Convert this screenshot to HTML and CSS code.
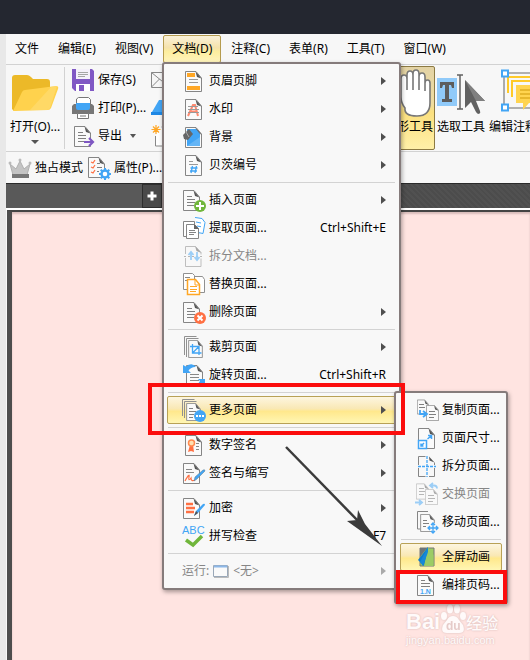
FILE: index.html
```html
<!DOCTYPE html>
<html lang="zh-CN">
<head>
<meta charset="utf-8">
<title>文档</title>
<link rel="stylesheet" href="styles.css">
</head>
<body>
<svg class="defs" aria-hidden="true">
  <symbol id="page" viewBox="0 0 17 21"><path d="M.5.500H11L16.500 7V20.500H.5Z" fill="#fafafa" stroke="#858585"/><path d="M10.500.500L16.500 7.500L12 6Z" fill="#555"/></symbol>
  <symbol id="lines" viewBox="0 0 17 21"><path d="M4 6.500h5M4 9.500h8M4 12.500h8M4 15.500h7" stroke="#808080"/></symbol>
</svg>

<div class="backdrop"></div>
<main class="app">
  <nav class="menubar">
    <button>文件</button><button>编辑(E)</button><button>视图(V)</button><button class="open">文档(D)</button><button>注释(C)</button><button>表单(R)</button><button>工具(T)</button><button>窗口(W)</button>
  </nav>

  <div class="toolbar">
    <button class="big open-file">
      <svg width="48" height="40" viewBox="0 0 48 40"><path d="M1 36V5q0-3 3-3h12q2 0 4 2l2 2h14q3 0 3 3v18L3 38Z" fill="#ecb928"/><path d="M2 38l9-19q1-2 3-2l31-4q3 0 2 3l-7 19q-1 2-3 2L4 38Z" fill="#ffd24d"/><path d="M19 37L40 14l6-1-7 22q-1 2-3 2Z" fill="#ffdc70" opacity=".7"/></svg>
      <span>打开(O)...</span>
      <svg width="8" height="5" viewBox="0 0 8 5"><path d="M0 0h8L4 4Z" fill="#555"/></svg>
    </button>
    <div class="stack">
      <button><svg width="24" height="24" viewBox="0 0 24 24"><path d="M1 1h20l2 2v20H4l-3-3Z" fill="#8058c4"/><path d="M5 1h14v10H5Z" fill="#f4f0fa"/><path d="M7 4.500h10M7 6.500h10M7 8.500h7" stroke="#a5a5a5"/><path d="M5 16h14v7H5Z" fill="#fff"/><path d="M8 17h5v6H8Z" fill="#8058c4"/></svg>保存(S)</button>
      <button><svg width="24" height="24" viewBox="0 0 24 24"><path d="M5.500 10V3l2-1.500h10l2 2V10" fill="#fff" stroke="#777"/><path d="M3 8h18l2 2v8H1v-8Z" fill="#777"/><path d="M5 7h14v5q0 2-2 2H7q-2 0-2-2Z" fill="#42a5f5"/><path d="M6.500 17.500h11v5h-11Z" fill="#fff" stroke="#777"/><path d="M9 20h6" stroke="#777"/></svg>打印(P)...</button>
      <button><svg width="24" height="24" viewBox="0 0 24 24"><use href="#page" x="3" y="2" width="17" height="21"/><use href="#lines" x="3" y="2" width="17" height="21"/><path d="M13 18h8" stroke="#f7f7f7" stroke-width="6"/><path d="M13 18h9M18 14l4 4-4 4" fill="none" stroke="#7e57c2" stroke-width="2.200"/></svg>导出<i class="caret"></i></button>
    </div>
    <div class="stack hidden-part">
      <button aria-label="邮件"><svg width="24" height="24" viewBox="0 0 24 24"><path d="M.5 4.500h22v15h-22ZM.5 4.500l11 9 11-9M.5 19l8-8" fill="none" stroke="#888"/></svg></button>
      <button aria-label="扫描"><svg width="24" height="24" viewBox="0 0 24 24"><path d="M1 16L8 4h15v12Z" fill="#42a5f5"/><path d="M0 16h24v3H0Z" fill="#1e88e5"/></svg></button>
      <button aria-label="新建"><svg width="24" height="24" viewBox="0 0 24 24"><path d="M4.500 12v10h15V3h-9" fill="#fff" stroke="#888"/><path d="M5 1v9M.5 5.500h9M2 2.500l6 6M8 2.500l-6 6" stroke="#ffa726" stroke-width="1.200"/></svg></button>
    </div>
    <button class="big tool active">
      <svg width="48" height="50" viewBox="0 0 48 50"><path d="M16 29V11q0-4 3-4t3 4v11V7q0-4 3-4t3 4v15V6q0-4 3-4t3 4v16V9q0-4 3-4t3 4v14v-8q0-3 2.500-3t2.500 3v20q0 13-13 13T20 40q-4-5-4-11Z" fill="#fff" stroke="#777" stroke-width="1.600"/></svg>
      <span>手形工具</span>
    </button>
    <button class="big tool">
      <svg width="48" height="50" viewBox="0 0 48 50"><path d="M0 10h20v28H0Z" fill="#90caf9"/><path d="M3 14h14v6h-2l-1-3h-2v14h3v3H5v-3h3V17H6l-1 3H3Z" fill="#5c5c5c"/><path d="M20 7h6M20 41h6M23 7v34" stroke="#616161" stroke-width="1.500"/><path d="M28 12L48 33h-9l4 10q1 2-1 3-2 0-3-2l-5-10-6 6Z" fill="#616161"/><path d="M28 12L48 33h-9Z" fill="#808080"/></svg>
      <span>选取工具</span>
    </button>
    <button class="big tool">
      <svg width="48" height="50" viewBox="0 0 48 50"><path d="M15 5h32v35H15Z" fill="none" stroke="#999" stroke-width="1.600"/><path d="M19 25V9h28M23 29V13h24" fill="none" stroke="#ffca28" stroke-width="2"/><path d="M27 17h21v18H40l-6 7v-7h-7Z" fill="#ffd44f"/><path d="M31 22h17M31 26h17M31 30h12" stroke="#e0ad22" stroke-width="1.500"/><path d="M13 2.500h6v6h-6ZM13 36.500h6v6h-6Z" fill="#fff" stroke="#42a5f5" stroke-width="2"/></svg>
      <span>编辑注释</span>
    </button>
  </div>

  <div class="quickbar">
    <button><svg width="24" height="24" viewBox="0 0 24 24"><path d="M2 8l6 5 4-8 4 8 6-5-3 11H5Z" fill="#c4c4c4" stroke="#b0b0b0"/><path d="M4 18h17v4H4Z" fill="#777"/><circle cx="2" cy="7" r="1.500" fill="#bbb"/><circle cx="12" cy="4" r="1.500" fill="#bbb"/><circle cx="22" cy="7" r="1.500" fill="#bbb"/></svg>独占模式</button>
    <button><svg width="24" height="24" viewBox="0 0 24 24"><use href="#page" x="1" y="1" width="17" height="21"/><path d="M4 6l2 1 2-3M4 11l2 1 2-3M4 16l2 1 2-3" fill="none" stroke="#ff7043" stroke-width="1.200"/><path d="M10 7.500h3M10 11.500h5M10 15.500h2" stroke="#808080"/><g stroke="#42a5f5"><circle cx="18" cy="18" r="3.500" fill="#fff" stroke-width="2.400"/><path d="M18 12v3M18 21v3M12 18h3M21 18h3M13.700 13.700l2 2M20.300 20.300l2 2M22.300 13.700l-2 2M15.700 20.300l-2 2" stroke-width="2"/></g></svg>属性(P)...</button>
  </div>

  <div class="tabs"><div class="tab-blank"></div><button aria-label="新标签"><svg width="10" height="10" viewBox="0 0 10 10"><path d="M3.500 .5h3v3h3v3h-3v3h-3v-3h-3v-3h3Z" fill="#fff"/></svg></button></div>
  <section class="document"></section>
</main>

<ul class="menu main-menu">
  <li><button><svg class="icon" viewBox="0 0 24 24"><use href="#page" x="3" y="2" width="17" height="21"/><path d="M5 4h8v4H5ZM5 17h13v4H5Z" fill="#ffa726"/><path d="M7 10.500h9M7 13.500h9" stroke="#999"/></svg>页眉页脚<b></b></button></li>
  <li><button><svg class="icon" viewBox="0 0 24 24"><use href="#page" x="3" y="2" width="17" height="21"/><path d="M6 19L11 8h2l3 11M8 14.500h7" fill="none" stroke="#ff8a70" stroke-width="2"/><path d="M6 9.500h10M6 12.500h11M6 15.500h11" stroke="#999"/></svg>水印<b></b></button></li>
  <li><button><svg class="icon" viewBox="0 0 24 24"><use href="#page" x="3" y="2" width="17" height="21"/><path d="M5 4h9l4 5v12H5Z" fill="#42a5f5"/><path d="M5 21L18 12v9Z" fill="#64b5f6"/><path d="M1 10l6-6 4 5-5 6-4-1Z" fill="#666"/><path d="M4 7l3 5" stroke="#aaa"/></svg>背景<b></b></button></li>
  <li><button><svg class="icon" viewBox="0 0 24 24"><use href="#page" x="3" y="2" width="17" height="21"/><path d="M7 8.500h4M7 11.500h9" stroke="#999"/><path d="M10.500 13L9 20M14.500 13L13 20M8.500 15h7M8 18h7" stroke="#42a5f5" stroke-width="1.300"/></svg>贝茨编号<b></b></button></li>
  <li class="sep"></li>
  <li><button><svg class="icon" viewBox="0 0 24 24"><use href="#page" x="1" y="2" width="17" height="21"/><use href="#lines" x="1" y="2" width="17" height="21"/><circle cx="18" cy="18" r="6" fill="#70b63b"/><path d="M18 14v8M14 18h8" stroke="#fff" stroke-width="2"/></svg>插入页面<b></b></button></li>
  <li><button><svg class="icon" viewBox="0 0 24 24"><path d="M13 1.500l7 1 3 4-2 11-5-1" fill="#fff" stroke="#42a5f5"/><path d="M14 6l5 1M15 10l4 .7" stroke="#42a5f5"/><path d="M1.500 5.500h11v15h-11Z" fill="#fff" stroke="#858585"/><path d="M4.500 8.500h8l4 4v10h-12Z" fill="#fff" stroke="#858585"/><path d="M12 8v5h5Z" fill="#666"/><path d="M7 14.500h6M7 16.500h7M7 18.500h5" stroke="#858585"/></svg>提取页面...<kbd>Ctrl+Shift+E</kbd></button></li>
  <li><button disabled><svg class="icon faded" viewBox="0 0 24 24"><path d="M3.500 10V2.500h10l5.500 6v2M3.500 14v8.500h15.500v-8" fill="none" stroke="#858585"/><path d="M13 2l6.500 7-5-2Z" fill="#555"/><path d="M2 12.500h19" stroke="#777" stroke-dasharray="2"/><path d="M9 8v8M6.500 11L9 8l2.500 3M15 8v8M12.500 13l2.500 3 2.500-3" fill="none" stroke="#42a5f5" stroke-width="1.800"/></svg>拆分文档...</button></li>
  <li><button><svg class="icon" viewBox="0 0 24 24"><path d="M1.500 1.500h9l2 2v14h-11ZM12.500 4.500h8l2 3v13h-10Z" fill="#fff" stroke="#909090"/><path d="M3 5.500h5M3 8.500h3" stroke="#888"/><path d="M5.500 7.500h8l4 5v10h-12Z" fill="#fff" stroke="#ffa726" stroke-width="1.500"/><path d="M13 7v6h4M8 14.500h7M8 17.500h7M8 19.500h6" fill="none" stroke="#ffa726"/></svg>替换页面...</button></li>
  <li><button><svg class="icon" viewBox="0 0 24 24"><use href="#page" x="1" y="2" width="17" height="21"/><use href="#lines" x="1" y="2" width="17" height="21"/><circle cx="18" cy="18" r="6" fill="#ff7043"/><path d="M15.500 15.500l5 5M20.500 15.500l-5 5" stroke="#fff" stroke-width="2"/></svg>删除页面<b></b></button></li>
  <li class="sep"></li>
  <li><button><svg class="icon" viewBox="0 0 24 24"><path d="M2.500 20V1.500h12M4.500 22V3.500h12" fill="none" stroke="#909090"/><use href="#page" x="6" y="5" width="15" height="18"/><path d="M10.500 9v9h9M8 11.500h9V20M10.500 18l6-6" fill="none" stroke="#42a5f5" stroke-width="1.300"/></svg>裁剪页面<b></b></button></li>
  <li><button><svg class="icon" viewBox="0 0 24 24"><use href="#page" x="4" y="2" width="17" height="21"/><path d="M8 11.500h9M8 14.500h9M8 17.500h9" stroke="#888"/><path d="M1 2v8h8L6.500 7.500q3-4 7.500-3.500-4-5-10-.5ZM23 24v-8h-7l2 2q-2 4-7 4 5 3 10 0Z" fill="#42a5f5"/></svg>旋转页面...<kbd>Ctrl+Shift+R</kbd></button></li>
  <li class="sep"></li>
  <li class="parent"><button class="hot"><svg class="icon" viewBox="0 0 24 24"><path d="M.5 18V1.500h12M2.500 20V3.500h12" fill="none" stroke="#909090"/><use href="#page" x="4" y="5" width="15" height="18"/><path d="M7 10.500h4M7 13.500h7M7 16.500h5M7 19.500h4" stroke="#808080"/><circle cx="18" cy="18" r="6" fill="#42a5f5"/><path d="M14 18h2M17 18h2M20 18h2" stroke="#fff" stroke-width="2"/></svg>更多页面<b></b></button>
    <ul class="menu sub-menu">
      <li><button><svg class="icon" viewBox="0 0 24 24"><use href="#page" x="2" y="1" width="12" height="16"/><path d="M4 6.500h5M4 9.500h6" stroke="#808080"/><use href="#page" x="11" y="7" width="13" height="16"/><path d="M14 13.500h6M14 16.500h7M14 19.500h5" stroke="#808080"/><path d="M5 12v4h6M8 13l4 3-4 3" fill="none" stroke="#42a5f5" stroke-width="1.800"/></svg>复制页面...</button></li>
      <li><button><svg class="icon" viewBox="0 0 24 24"><use href="#page" x="3" y="2" width="17" height="21"/><path d="M3.500 14.500h8v8h-8Z" fill="#fff" stroke="#42a5f5" stroke-width="1.500"/><path d="M6 20l3-3M6 17.500V20h2.500M12.500 13l3.500-3M13 9.500h3.500V13" fill="none" stroke="#42a5f5" stroke-width="1.500"/></svg>页面尺寸...</button></li>
      <li><button><svg class="icon" viewBox="0 0 24 24"><path d="M3.500 11V2.500h7M3.500 14v8.500h7M14 22.500h5.500V14M19.500 11V8.500" fill="none" stroke="#858585"/><path d="M14 2.500l5.500 6-5-2Z" fill="#555"/><path d="M12 2v21M3 12.500h18" stroke="#42a5f5" stroke-width="1.300" stroke-dasharray="3 1"/></svg>拆分页面...</button></li>
      <li><button disabled><svg class="icon faded" viewBox="0 0 24 24"><use href="#page" x="1" y="1" width="13" height="17"/><path d="M4 6.500h5M4 9.500h6M4 12.500h5" stroke="#777"/><use href="#page" x="10" y="7" width="13" height="16"/><path d="M13 13.500h6M13 16.500h7M13 19.500h5" stroke="#777"/><path d="M18 1l-3 2.500 3 2.500M16 3.500h3q3 0 3 3M4 18l3 2.500-3 2.500M0 20.500h6" fill="none" stroke="#42a5f5" stroke-width="1.800"/></svg>交换页面</button></li>
      <li><button><svg class="icon" viewBox="0 0 24 24"><path d="M13 1.500H2.500V19h3" fill="none" stroke="#858585"/><use href="#page" x="5" y="4" width="15" height="18"/><path d="M8 10.500h4M8 13.500h6M8 16.500h3" stroke="#808080"/><path d="M18 13v10M13 18h10" stroke="#f7f7f7" stroke-width="4"/><path d="M18 13v10M13 18h10M16 15l2-2 2 2M16 21l2 2 2-2M15 16l-2 2 2 2M21 16l2 2-2 2" fill="none" stroke="#42a5f5" stroke-width="1.300"/></svg>移动页面...</button></li>
      <li class="sep"></li>
      <li><button class="hot"><svg class="icon" viewBox="0 0 24 24"><path d="M5 3h14v18H5Z" fill="#9ccc65" stroke="#777"/><path d="M13 2L3 15l6 6Z" fill="#0d7ccd"/><path d="M13 2v5L8 21l-3-4Z" fill="#1788d8"/><path d="M5 3h7L5 12Z" fill="#6d7478"/><path d="M13 2l1 5-5 14h9.500V10Z" fill="#9ccc65"/></svg>全屏动画</button></li>
      <li><button><svg class="icon" viewBox="0 0 24 24"><use href="#page" x="2" y="2" width="17" height="21"/><path d="M6 7.500h4M6 10.500h9M6 13.500h9" stroke="#808080"/><text x="5" y="21" class="num">1.N</text></svg>编排页码...</button></li>
    </ul>
  </li>
  <li class="sep"></li>
  <li><button><svg class="icon" viewBox="0 0 24 24"><use href="#page" x="3" y="2" width="17" height="21"/><path d="M8 12l-2 7 3-1 3 1-1-7Z" fill="#ff7043"/><circle cx="9.500" cy="10" r="3" fill="#ffe0b2" stroke="#ff8a50" stroke-width="1.500"/><path d="M14 10.500h3M14 13.500h3M14 16.500h3" stroke="#888"/></svg>数字签名<b></b></button></li>
  <li><button><svg class="icon" viewBox="0 0 24 24"><use href="#page" x="1" y="2" width="17" height="21"/><path d="M4 8.500h6M4 11.500h8" stroke="#888"/><path d="M3 20q5-9 4-4-1 5 2 1 0 4 4 2" fill="none" stroke="#ff7043" stroke-width="1.200"/><path d="M12 20l1-4 8-7q2-1 2 1l-8 8Z" fill="#42a5f5" stroke="#607d8b" stroke-width=".5"/></svg>签名与缩写<b></b></button></li>
  <li class="sep"></li>
  <li><button><svg class="icon" viewBox="0 0 24 24"><use href="#page" x="1" y="2" width="17" height="21"/><path d="M4 8h7M4 12h9M4 16h8" stroke="#ff7043" stroke-width="2.500"/><path d="M12 20l2-5 7-7q2-1 2 1l-7 8Z" fill="#42a5f5"/><path d="M12 20l2-5 2 2Z" fill="#555"/></svg>加密<b></b></button></li>
  <li><button><svg class="icon" viewBox="0 0 24 24"><text x="0" y="10" class="abc">ABC</text><path d="M4 16l7 5 9-9" fill="none" stroke="#70b63b" stroke-width="3.500"/></svg>拼写检查<kbd>F7</kbd></button></li>
  <li class="sep"></li>
  <li><button disabled>运行:<svg class="run" width="16" height="13" viewBox="0 0 16 13"><path d="M.5.500h14v11H.5Z" fill="#fafafa" stroke="#9aa8b8"/><path d="M1 1.500h13" stroke="#8db8e8" stroke-width="2"/><path d="M1 12.500h14.500V1" fill="none" stroke="#bbb"/></svg>&lt;无&gt;<b></b></button></li>
</ul>

<div class="mark mark-item"></div>
<div class="mark mark-target"></div>
<svg class="pointer" width="100" height="102" viewBox="0 0 100 102"><path d="M1 1L76 78" stroke="#3b3b3b" stroke-width="2.500"/><path d="M97 100L62 75l10-1 1-10 7 14Z" fill="#3b3b3b"/></svg>

<div class="watermark">
  <div class="brand">Bai<svg width="26" height="30" viewBox="0 0 26 30"><ellipse cx="4" cy="12" rx="3" ry="4"/><ellipse cx="10" cy="5" rx="3" ry="4.500"/><ellipse cx="17" cy="5" rx="3" ry="4.500"/><ellipse cx="23" cy="12" rx="3" ry="4"/><path d="M13 12q4 0 6 4l4 5q3 8-4 8H7q-7 0-4-8l4-5q2-4 6-4Z"/><text x="6" y="26">du</text></svg><span>经验</span></div>
  <div class="site">jingyan.baidu.com</div>
</div>
</body>
</html>
```
FILE: styles.css
```css
* { box-sizing: border-box; }

body {
  margin: 0;
  min-height: 100vh;
  display: flex;
  flex-direction: column;
  position: relative;
  overflow: hidden;
  background: #e8e8e8;
  color: #000;
  font: 12px/16px "Noto Sans", "Noto Sans CJK SC", sans-serif;
}

button {
  font: inherit;
  color: inherit;
  background: none;
  border: 0;
  padding: 0;
  margin: 0;
  white-space: nowrap;
}

svg { flex: none; display: block; }
.defs { position: absolute; width: 0; height: 0; }

.backdrop { height: 34px; background: #242730; }

.app {
  flex: 1;
  margin-left: 6px;
  display: flex;
  flex-direction: column;
  overflow: hidden;
  background: #f7f7f7;
}

/* Menu bar */
.menubar {
  display: flex;
  gap: 1px;
  height: 31px;
  padding-top: 1px;
  border-bottom: 1px solid #d2d2d2;
}
.menubar button { padding: 0 8px; border: 1px solid transparent; height: 28px; }
.menubar .open {
  border-color: #b59b4e;
  border-radius: 2px;
  background: linear-gradient(#faf1d8, #f5e2ab 45%, #fdee9e 60%, #fff4bc);
}

/* Toolbars */
.toolbar { display: flex; height: 87px; border-bottom: 1px solid #d2d2d2; }
.big { display: flex; flex-direction: column; align-items: center; }
.open-file { width: 59px; padding-top: 6px; margin: 2px 0; border-right: 1px solid #d2d2d2; flex: none; }
.open-file span { margin: 6px 0 5px; }
.stack { display: flex; flex-direction: column; padding: 1px 0 0 6px; width: 82px; flex: none; }
.stack button { display: flex; align-items: center; height: 28px; gap: 3px; }
.caret { border: 3px solid transparent; border-top: 4px solid #555; border-bottom: 0; margin-left: 5px; }
.hidden-part { width: 236px; padding-left: 4px; }
.tool { width: 52px; padding-top: 1px; margin: 1px 0; border: 1px solid transparent; flex: none; }
.tool span { padding-top: 1px; }
.tool.active {
  border-color: #8c7a43;
  border-radius: 2px;
  background: linear-gradient(#e3d3a5, #efdc9f 45%, #fbe07f 55%, #fff0a8);
}

.quickbar { display: flex; gap: 4px; height: 31px; padding-left: 2px; }
.quickbar button { display: flex; align-items: center; gap: 3px; }

/* Tab strip and document */
.tabs {
  display: flex;
  height: 27px;
  border-top: 1px solid #2a2a2a;
  border-bottom: 2px solid #fff;
  background: repeating-linear-gradient(45deg, #4c4c4c 0 2px, #515151 2px 4px);
}
.tab-blank { width: 136px; background: #595959; }
.tabs button {
  width: 20px;
  display: flex;
  align-items: center;
  justify-content: center;
  background: #4a4a4a;
  border: 1px solid #2e2e2e;
}
.document {
  flex: 1;
  margin-left: 1px;
  border-top: 2px solid #444;
  border-left: 5px solid #4d4d4d;
  background: #ffe4e1;
  box-shadow: inset 0 2px 2px #d8bcba;
}

/* Pop-up menus */
.menu {
  position: absolute;
  margin: 0;
  padding: 3px;
  list-style: none;
  background: #f8f8f8;
  border: 2px solid #857b7b;
  border-radius: 3px;
  box-shadow: 1px 2px 4px rgba(0, 0, 0, .35);
}
.main-menu { left: 162px; top: 62px; width: 239px; }
.sub-menu { left: 227px; top: -5px; width: 114px; padding: 3px 4px; z-index: 1; }
.parent { position: relative; }
.menu button {
  display: flex;
  align-items: center;
  gap: 3px;
  width: 100%;
  height: 28px;
  padding: 0 9px 0 14px;
  border: 1px solid transparent;
  text-align: left;
}
.menu button:disabled { color: #868686; }
.menu .hot {
  border-color: #b8a156;
  border-radius: 2px;
  background: linear-gradient(#fdf6e0, #f9e8b4 45%, #ffe88c 55%, #fff6b4);
}
.sep { height: 7px; padding: 3px 1px; }
.sep::before { content: ""; display: block; height: 1px; background: #d3d3d3; }
.icon { width: 24px; height: 24px; }
.faded { opacity: .5; }
.menu b {
  margin-left: auto;
  border: 4px solid transparent;
  border-left: 5px solid #4f4f4f;
  border-right: 0;
}
.menu button:disabled b { border-left-color: #aaa; }
kbd { font: inherit; margin-left: auto; }
.run { margin: 0 1px; }
.num { font: bold 7px "Liberation Sans", sans-serif; fill: #42a5f5; }
.abc { font: 11px "Liberation Sans", sans-serif; fill: #42a5f5; }

/* Annotations */
.mark { position: absolute; z-index: 2; border: 4px solid #fb0d0d; }
.mark-item { left: 148px; top: 383px; width: 257px; height: 52px; }
.mark-target { left: 396px; top: 570px; width: 111px; height: 34px; }
.pointer { position: absolute; z-index: 2; left: 285px; top: 446px; }

.watermark { position: absolute; left: 406px; top: 603px; color: #fffafa; text-shadow: 0 0 2px #cfb0ae; }
.brand { display: flex; align-items: flex-end; height: 31px; font: bold 22px/24px "Liberation Sans", sans-serif; }
.brand svg { fill: #fffafa; filter: drop-shadow(0 0 1px #d9bdbb); }
.brand text { font: bold 12px "Liberation Sans", sans-serif; fill: #e6cbc9; text-shadow: none; }
.brand span { font: 500 16px/24px "Noto Sans CJK SC", sans-serif; }
.site { font: 11px/13px "Liberation Sans", sans-serif; }
```
